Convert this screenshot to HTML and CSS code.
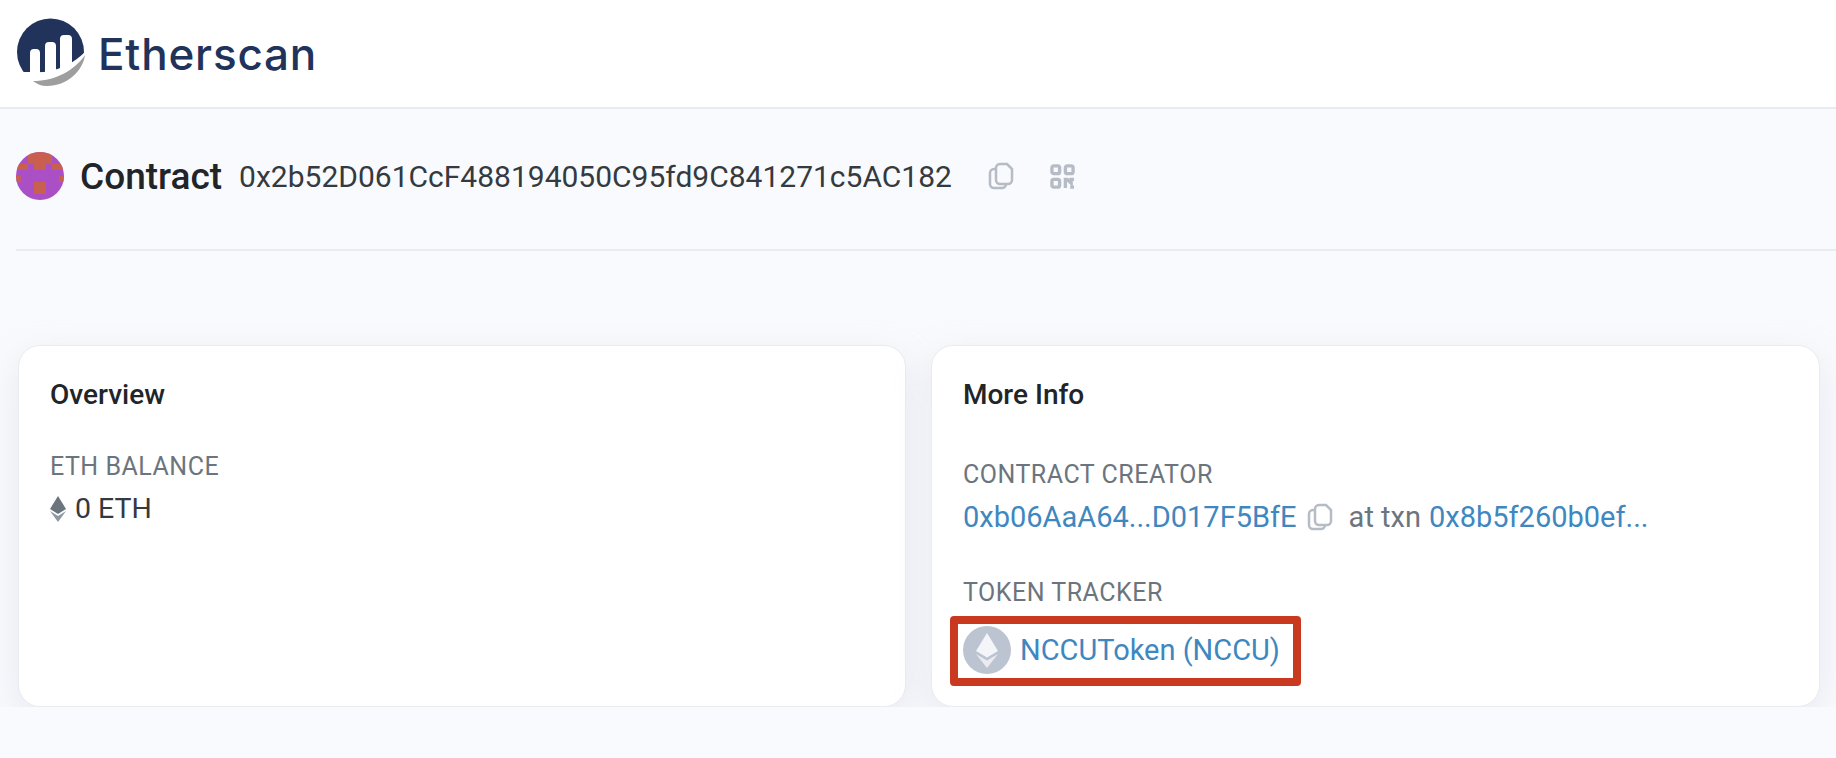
FILE: index.html
```html
<!DOCTYPE html>
<html>

<head>
    <title>Etherscan Contract</title>
    <link rel="stylesheet" href="styles.css">
</head>

<body>
    <!-- Logo bar -->
    <header class="topbar">
        <svg class="logo" viewBox="0 0 80 80" width="80" height="80">
            <circle cx="40.500" cy="38" r="33.500" fill="#21325b"/>
            <path fill="#fff" d="M20 60V39a4 4 0 0 1 4-4h2a4 4 0 0 1 4 4v21zM35 60V32a4 4 0 0 1 4-4h3a4 4 0 0 1 4 4v28zM50 60V25a4 4 0 0 1 4-4h4a4 4 0 0 1 4 4v30z"/>
            <path fill="#fff" d="M0 58h20C42 60 62 52 77 36l3 44H0z"/>
            <path fill="#9e9e9e" d="M75 41c-2 16-18 31-38 31-6 0-10-2-14-5 22 0 41-10 52-26z"/>
        </svg>
        <span class="brand">Etherscan</span>
    </header>

    <main class="page">
        <!-- Address heading -->
        <div class="address-row">
            <svg class="avatar" viewBox="0 0 8 8" width="48" height="48">
                <rect width="8" height="8" fill="#ab4fc6"/>
                <rect x="2" y="0" width="4" height="2" fill="#c9604f"/>
                <rect x="0" y="2" width="2" height="1" fill="#c9604f"/>
                <rect x="3" y="2" width="2" height="1" fill="#c9604f"/>
                <rect x="6" y="2" width="2" height="1" fill="#c9604f"/>
                <rect x="3" y="5" width="2" height="2" fill="#c9604f"/>
                <rect x="0" y="4" width="0.800" height="1" fill="#c9604f"/>
                <rect x="7.200" y="4" width="0.800" height="1" fill="#c9604f"/>
            </svg>
            <h1>Contract</h1>
            <span class="address">0x2b52D061CcF488194050C95fd9C841271c5AC182</span>
            <svg class="copy-icon head-copy" viewBox="0 0 26 28" width="26" height="28">
                <path d="M8 6a4 4 0 0 1 4-4h7l5 5v11a4 4 0 0 1-4 4h-8a4 4 0 0 1-4-4z"/>
                <path d="M8 7H6a4 4 0 0 0-4 4v11a4 4 0 0 0 4 4h8a4 4 0 0 0 4-4"/>
            </svg>
            <svg class="qr-icon" viewBox="0 0 26 26" width="25" height="25">
                <rect x="2" y="2" width="8" height="8" rx="2"/>
                <rect x="16" y="2" width="8" height="8" rx="2"/>
                <rect x="2" y="16" width="8" height="8" rx="2"/>
                <path d="M16 25v-9h2l4 4v-4h3M21 24h4"/>
            </svg>
        </div>

        <div class="cards">
            <!-- Overview -->
            <section class="card">
                <h2>Overview</h2>
                <div class="label balance-label">ETH BALANCE</div>
                <div class="balance">
                    <svg viewBox="0 0 16 26" width="16" height="26">
                        <path fill="#6c757e" d="M8 0l8 13-8 5-8-5z"/>
                        <path fill="#8c98a4" d="M0 15l8 5 8-5-8 11z"/>
                    </svg>
                    <span>0 ETH</span>
                </div>
            </section>

            <!-- More info -->
            <section class="card">
                <h2>More Info</h2>
                <div class="label creator-label">CONTRACT CREATOR</div>
                <div class="creator">
                    <a href="#">0xb06AaA64...D017F5BfE</a>
                    <svg class="copy-icon" viewBox="0 0 26 28" width="26" height="28">
                        <path d="M8 6a4 4 0 0 1 4-4h7l5 5v11a4 4 0 0 1-4 4h-8a4 4 0 0 1-4-4z"/>
                        <path d="M8 7H6a4 4 0 0 0-4 4v11a4 4 0 0 0 4 4h8a4 4 0 0 0 4-4"/>
                    </svg>
                    <span class="at-txn">at txn</span>
                    <a href="#">0x8b5f260b0ef...</a>
                </div>
                <div class="label tracker-label">TOKEN TRACKER</div>
                <a class="token" href="#">
                    <svg viewBox="0 0 48 48" width="48" height="48">
                        <circle cx="24" cy="24" r="24" fill="#bcc3d1"/>
                        <path fill="#f4f5f8" d="M24 7l11 18-11 6.500L13 25z"/>
                        <path fill="#e9ebf0" d="M13 28l11 6.500L35 28 24 42z"/>
                    </svg>
                    <span>NCCUToken (NCCU)</span>
                </a>
            </section>
        </div>
    </main>
</body>

</html>
```

FILE: styles.css
```css
body {
    margin: 0;
    background-color: #f9fafd;
    color: #212529;
    font-family: 'Roboto', sans-serif;
}

a {
    color: #3f87bf;
    text-decoration: none;
}

.topbar {
    display: flex;
    align-items: center;
    gap: 8px;
    height: 107px;
    padding: 0 10px;
    background: #fff;
    border-bottom: 2px solid #e9ecef;
}

.brand {
    font-family: 'Inter', sans-serif;
    font-size: 44px;
    font-weight: 500;
    letter-spacing: 0.8px;
    color: #21325b;
}

.page {
    padding-left: 16px;
}

.address-row {
    display: flex;
    align-items: center;
    height: 142px;
    padding-bottom: 6px;
    box-sizing: border-box;
    border-bottom: 2px solid #e9ecef;
}

.avatar {
    border-radius: 50%;
    margin-right: 16px;
}

h1 {
    margin: 0 17px 0 0;
    font-size: 37px;
    font-weight: 500;
}

.address {
    font-size: 30px;
    color: #343a40;
}

.copy-icon {
    fill: none;
    stroke: #b6bcc6;
    stroke-width: 2.500;
}

.head-copy {
    margin-left: 36px;
}

.qr-icon {
    margin-left: 36px;
    fill: none;
    stroke: #b6bcc6;
    stroke-width: 3.500;
}

.cards {
    display: grid;
    grid-template-columns: 888px 889px;
    gap: 25px;
    margin: 94px 0 0 2px;
}

.card {
    height: 362px;
    padding: 34px 31px;
    box-sizing: border-box;
    background: #fff;
    border: 1px solid #e9ecef;
    border-radius: 22px;
    box-shadow: 0 12px 36px rgba(189, 197, 209, 0.3);
}

h2 {
    margin: 0;
    font-size: 28px;
    line-height: 30px;
    font-weight: 500;
}

.label {
    font-size: 25px;
    line-height: 28px;
    letter-spacing: 0.5px;
    color: #6c757e;
}

.balance-label {
    margin-top: 43px;
}

.balance {
    display: flex;
    align-items: center;
    gap: 9px;
    margin-top: 12px;
    font-size: 28.500px;
    line-height: 32px;
    color: #343a40;
}

.creator-label {
    margin-top: 51px;
}

.creator {
    display: flex;
    align-items: center;
    gap: 10px;
    margin-top: 11px;
    font-size: 29px;
    line-height: 34px;
}

.at-txn {
    margin: 0 -2px 0 6px;
    color: #6c757e;
}

.tracker-label {
    margin-top: 45px;
}

.token {
    display: flex;
    width: fit-content;
    align-items: center;
    gap: 9px;
    margin: 9px 0 0 -13px;
    padding: 2px 13px 4px 5px;
    font-size: 29px;
    border: 8px solid #c8391f;
    border-radius: 4px;
}
```
